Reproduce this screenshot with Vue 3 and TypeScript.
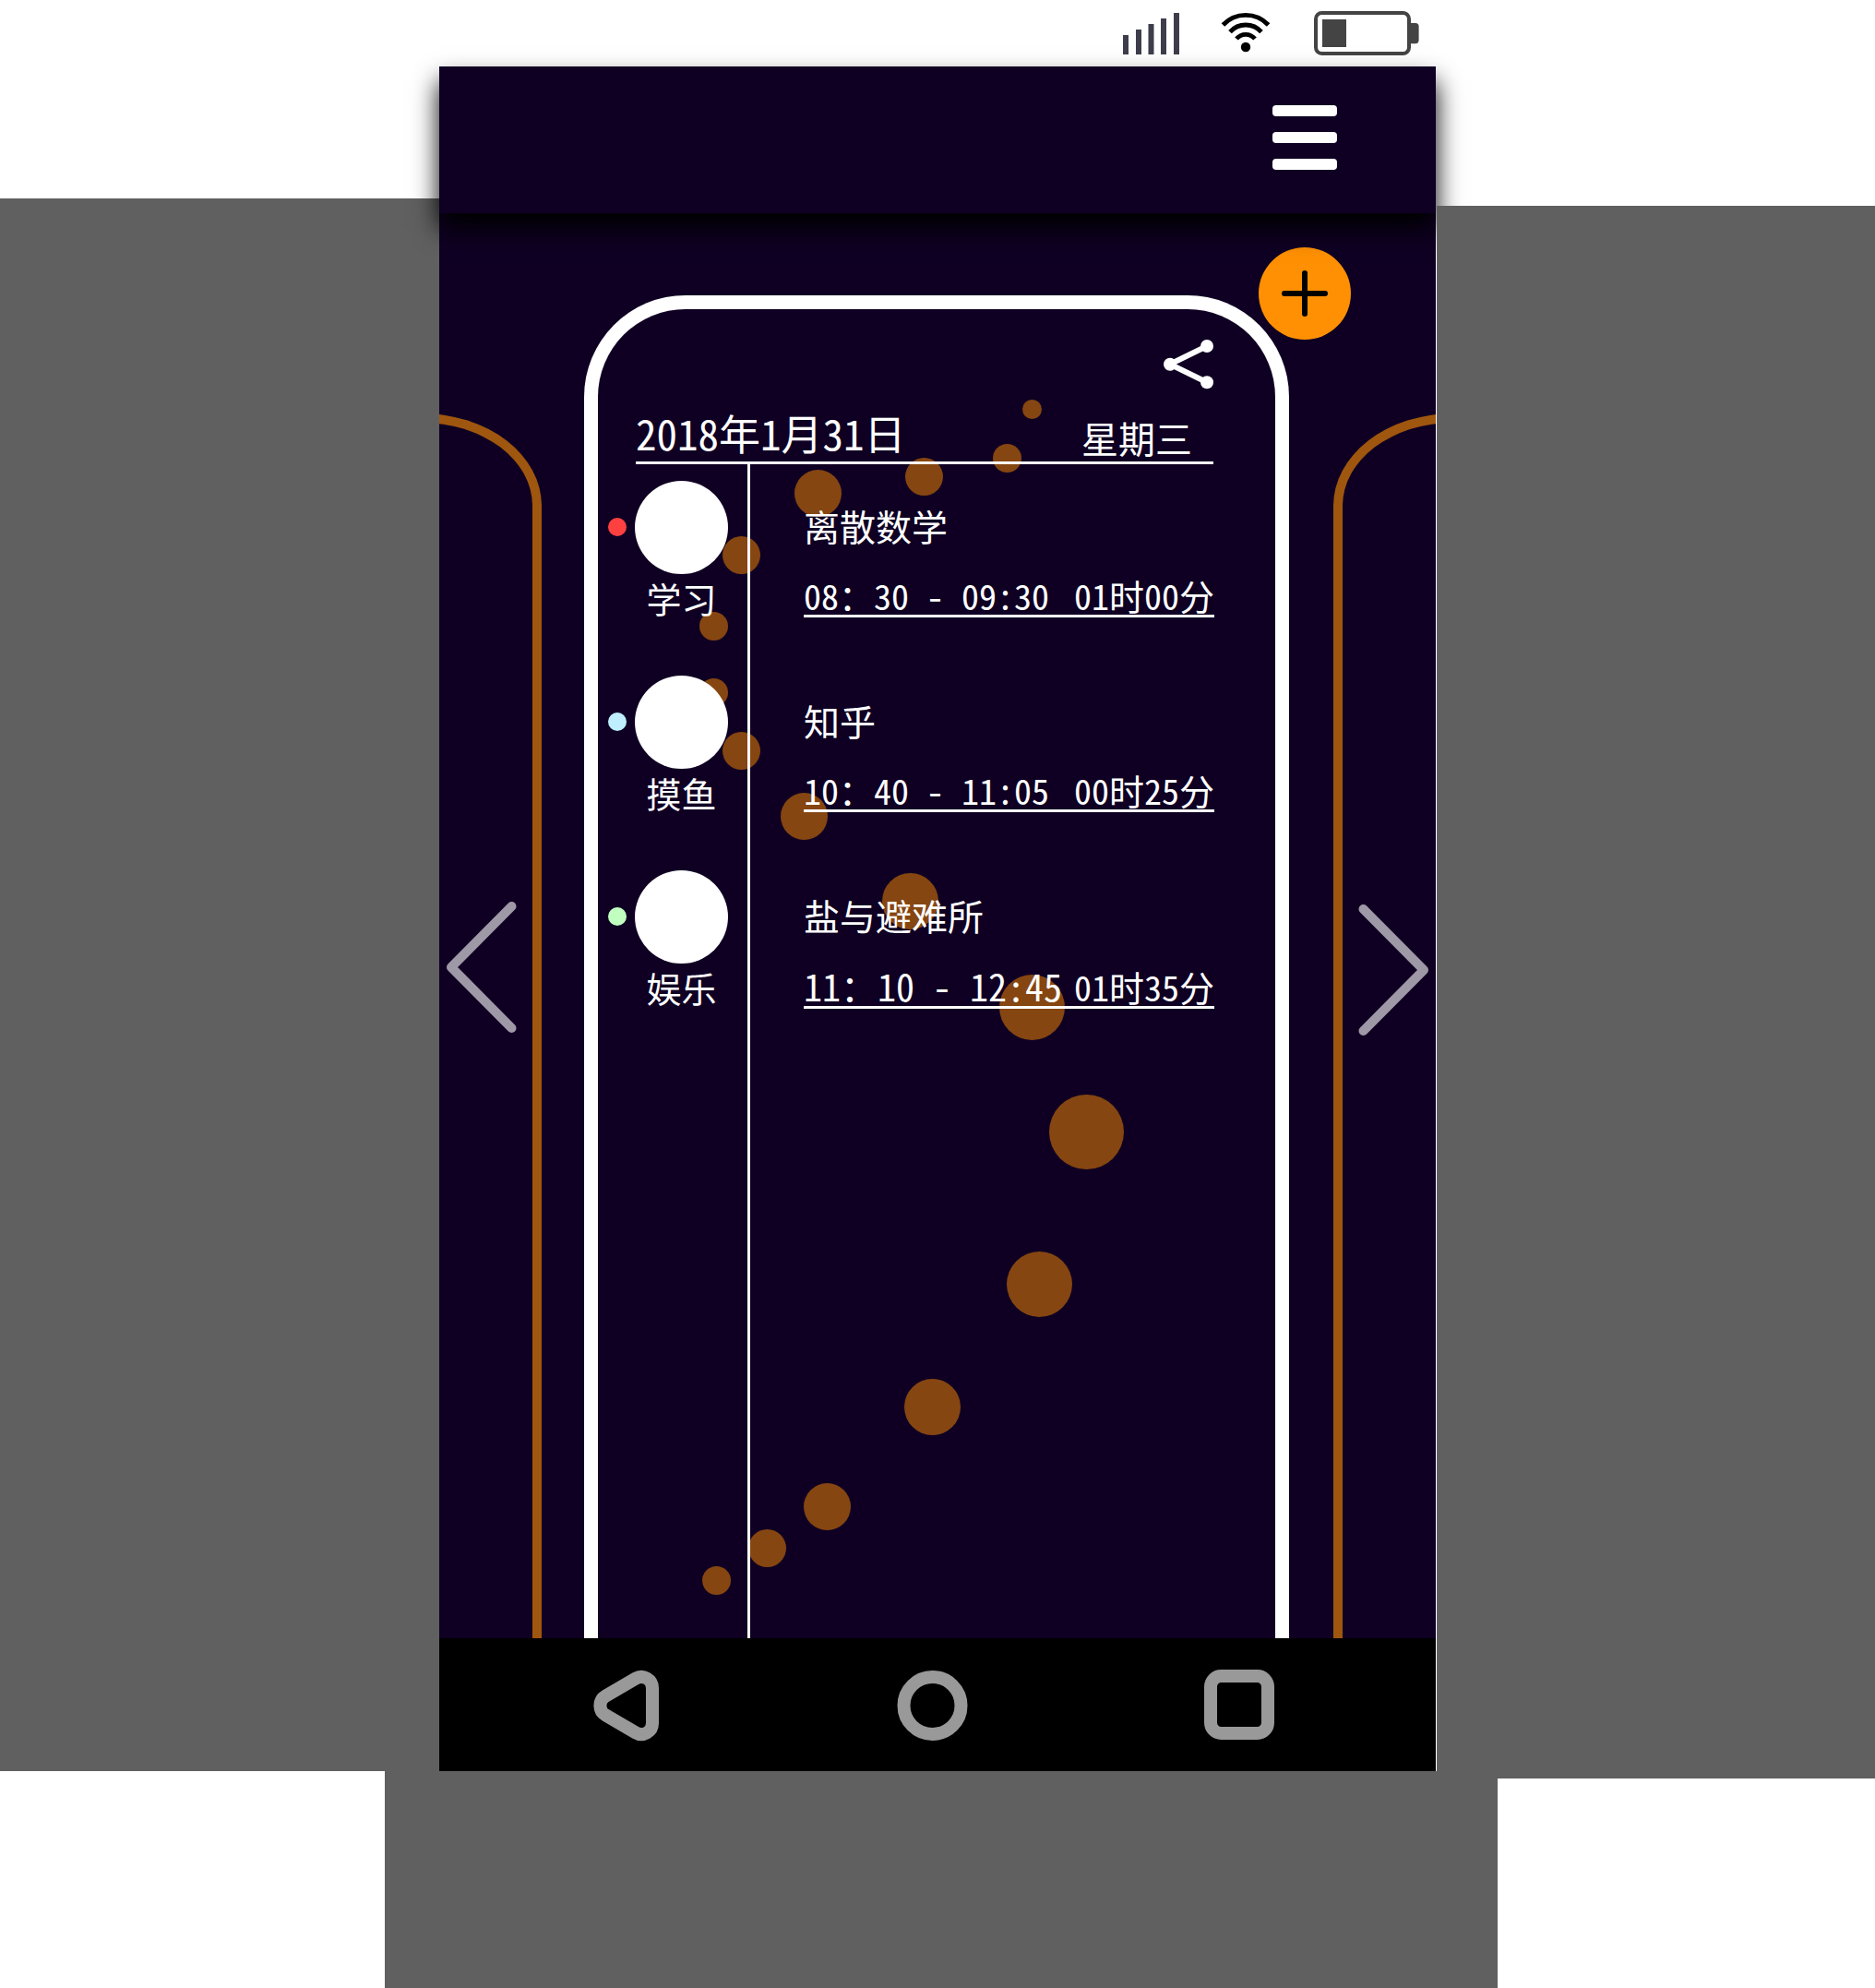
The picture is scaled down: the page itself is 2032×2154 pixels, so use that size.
<script setup lang="ts">
interface Entry {
  category: string
  color: string
  title: string
  time: string
  duration: string
  large?: boolean
}

interface Bead {
  x: number
  y: number
  r: number
}

const entries: Entry[] = [
  { category: '学习', color: '#ff4040', title: '离散数学', time: '08：30 - 09:30', duration: '01时00分' },
  { category: '摸鱼', color: '#bfefff', title: '知乎', time: '10：40 - 11:05', duration: '00时25分' },
  { category: '娱乐', color: '#c1ffc1', title: '盐与避难所', time: '11：10 - 12:45', duration: '01时35分', large: true },
]

// Decorative trail of beads winding down behind the schedule
const beads: Bead[] = [
  { x: 470.5, y: 108.5, r: 10.5 },
  { x: 443.5, y: 161.5, r: 15.5 },
  { x: 353.5, y: 181.5, r: 20.5 },
  { x: 238.5, y: 199.5, r: 25.5 },
  { x: 155.5, y: 266.5, r: 20.5 },
  { x: 125.5, y: 343.5, r: 15.5 },
  { x: 125.5, y: 415.5, r: 15.5 },
  { x: 155.5, y: 478.5, r: 20.5 },
  { x: 223.5, y: 549.5, r: 25.5 },
  { x: 338.5, y: 641.5, r: 30.5 },
  { x: 470.5, y: 756.5, r: 35.5 },
  { x: 529.5, y: 891.5, r: 40.5 },
  { x: 478.5, y: 1056.5, r: 35.5 },
  { x: 362.5, y: 1189.5, r: 30.5 },
  { x: 248.5, y: 1297.5, r: 25.5 },
  { x: 183.5, y: 1342.5, r: 20.5 },
  { x: 128.5, y: 1377.5, r: 15.5 },
]
</script>

<template>
  <div class="page">
    <div class="stage">
      <div class="panel panel-left"></div>

      <div class="phone">
        <div class="status">
          <svg class="signal" viewBox="0 0 62 72" fill="#3d3d4b" aria-hidden="true">
            <rect x="0" y="38" width="6" height="21" />
            <rect x="14" y="32" width="6" height="27" />
            <rect x="27.5" y="26" width="6" height="33" />
            <rect x="41" y="20" width="6" height="39" />
            <rect x="55" y="14" width="6" height="45" />
          </svg>
          <svg class="wifi" viewBox="0 0 54 72" fill="none" stroke="#000" stroke-width="4.8" aria-hidden="true">
            <path d="M2.4 27A33.6 33.6 0 0 1 51.6 27" />
            <path d="M10 34.6A22.8 22.8 0 0 1 44 34.6" />
            <path d="M17 42A13 13 0 0 1 37 42" />
            <circle cx="27" cy="51" r="5.2" fill="#000" stroke="none" />
          </svg>
          <svg class="battery" viewBox="0 0 114 72" aria-hidden="true">
            <rect x="2" y="14" width="101" height="44" rx="6.5" fill="#fff" stroke="#444" stroke-width="4" />
            <rect x="9" y="21" width="26" height="30" fill="#444" />
            <path d="M104 25h6a3.6 3.6 0 0 1 3.6 3.6v15a3.6 3.6 0 0 1-3.6 3.6h-6z" fill="#444" />
          </svg>
        </div>

        <header class="bar">
          <button class="menu" type="button" aria-label="菜单">
            <span></span>
            <span></span>
            <span></span>
          </button>
        </header>

        <main class="screen">
          <div class="peek peek-left"></div>

          <section class="card">
            <svg class="trail" viewBox="0 0 734 1440" aria-hidden="true">
              <circle v-for="(b, i) in beads" :key="i" :cx="b.x" :cy="b.y" :r="b.r" fill="#864611" />
            </svg>
            <div class="tools">
              <button class="share" type="button" aria-label="分享">
                <svg viewBox="0 0 56 54" fill="#fff" stroke="#fff" aria-hidden="true">
                  <path d="M48 7L8 26.7L48 46.3" fill="none" stroke-width="6" />
                  <circle cx="8" cy="26.7" r="7" stroke="none" />
                  <circle cx="48" cy="7" r="7" stroke="none" />
                  <circle cx="48" cy="46.3" r="7" stroke="none" />
                </svg>
              </button>
            </div>
            <div class="day">
              <time class="date" datetime="2018-01-31">2018年1月31日</time>
              <span class="weekday">星期三</span>
            </div>
            <ul class="timeline">
              <li v-for="e in entries" :key="e.title" class="entry">
                <div class="category">
                  <span class="dot" :style="{ background: e.color }"></span>
                  <span class="avatar"></span>
                  <span class="label">{{ e.category }}</span>
                </div>
                <div class="detail">
                  <h2 class="title">{{ e.title }}</h2>
                  <p :class="['slot', { 'slot-large': e.large }]">
                    <span class="range">{{ e.time }}</span>
                    <span class="duration">{{ e.duration }}</span>
                  </p>
                </div>
              </li>
            </ul>
          </section>

          <div class="peek peek-right"></div>

          <button class="add" type="button" aria-label="添加">
            <svg viewBox="0 0 100 100" fill="none" stroke="#000" stroke-width="6" stroke-linecap="round" aria-hidden="true">
              <path d="M50 28V72M28 50H72" />
            </svg>
          </button>
          <button class="arrow arrow-prev" type="button" aria-label="前一天">
            <svg viewBox="0 0 76 144" aria-hidden="true">
              <path d="M70.5 6L5 72L70.5 138" />
            </svg>
          </button>
          <button class="arrow arrow-next" type="button" aria-label="后一天">
            <svg viewBox="0 0 76 144" aria-hidden="true">
              <path d="M5.5 6L71 72L5.5 138" />
            </svg>
          </button>
        </main>

        <nav class="nav">
          <button type="button" aria-label="返回">
            <svg viewBox="0 0 76 76">
              <path d="M16.4 27.6L48.9 8.6A12 12 0 0 1 67 19V57A12 12 0 0 1 48.9 67.4L16.4 48.4A12 12 0 0 1 16.4 27.6Z" />
            </svg>
          </button>
          <button type="button" aria-label="主屏幕">
            <svg viewBox="0 0 76 76"><circle cx="37.5" cy="38" r="31" /></svg>
          </button>
          <button type="button" aria-label="最近任务">
            <svg viewBox="0 0 76 76"><rect x="7" y="6" width="62" height="62" rx="11.5" /></svg>
          </button>
        </nav>
      </div>

      <div class="panel panel-right"></div>
    </div>
    <div class="base"></div>
  </div>
</template>

<style>
body {
  margin: 0;
  background: #fff;
}
</style>

<style scoped>
.page {
  display: flex;
  flex-direction: column;
  min-height: 100vh;
  font-family: 'Noto Sans CJK SC', sans-serif;
  font-weight: 400;
  font-feature-settings: 'hwid';
  color: #fff;
}

button {
  display: block;
  padding: 0;
  border: 0;
  background: none;
  cursor: pointer;
}

svg {
  display: block;
  overflow: visible;
}

.stage {
  flex: 1;
  display: grid;
  grid-template-columns: 1fr 1080px 1fr;
}

.panel {
  position: relative;
  z-index: 1;
  background: #606060;
}

.panel-left {
  margin-top: 215px;
}

.panel-right {
  margin: 223px 0 -8px 1px;
}

.base {
  align-self: center;
  width: 1206px;
  height: 235px;
  margin-right: -8px;
  background: #606060;
}

.phone {
  display: flex;
  flex-direction: column;
}

.status {
  display: flex;
  justify-content: flex-end;
  gap: 44px;
  height: 72px;
  padding-right: 18px;
}

.status svg {
  height: 72px;
}

.signal {
  width: 62px;
}

.wifi {
  width: 54px;
}

.battery {
  width: 114px;
  margin-left: 3px;
}

.bar {
  position: relative;
  z-index: 1;
  display: flex;
  justify-content: flex-end;
  height: 159px;
  box-sizing: border-box;
  padding: 42px 107px 0 0;
  background: #0f0023;
  box-shadow: 0 16px 26px #000;
}

.menu {
  display: flex;
  flex-direction: column;
  gap: 17px;
  width: 70px;
  height: 70px;
}

.menu span {
  width: 100%;
  height: 12px;
  border-radius: 4px;
  background: #fff;
}

.screen {
  position: relative;
  z-index: 0;
  flex: 1;
  display: flex;
  overflow: hidden;
  background: #0f0023;
}

/* Edges of the neighbouring day cards */
.peek {
  width: 111px;
  flex: none;
  display: flex;
  margin-top: 217px;
  overflow: hidden;
}

.peek-left {
  justify-content: flex-end;
  margin-right: 46px;
}

.peek-right {
  margin-left: 48px;
}

.peek::before {
  content: '';
  flex: none;
  width: 300px;
  box-sizing: border-box;
  border: 10px solid #9f560e;
  border-bottom: 0;
  border-radius: 130px 130px 0 0 / 100px 100px 0 0;
}

.card {
  position: relative;
  flex: 1;
  display: flex;
  flex-direction: column;
  margin-top: 89px;
  padding-top: 33px;
  border: 15px solid #fff;
  border-bottom: 0;
  border-radius: 110px 110px 0 0;
}

.trail {
  position: absolute;
  top: 0;
  left: 0;
  z-index: -1;
  width: 734px;
  height: 1440px;
}

.tools {
  display: flex;
  justify-content: flex-end;
  padding-right: 66px;
}

.share,
.share svg {
  width: 56px;
  height: 54px;
}

.day {
  display: flex;
  justify-content: space-between;
  align-items: flex-end;
  height: 75px;
  margin: 0 67px 0 41px;
  padding-bottom: 3px;
  border-bottom: 3px solid #fff;
}

.date {
  font-size: 45px;
  line-height: 56px;
}

.weekday {
  padding-right: 23px;
  font-size: 40px;
  line-height: 46px;
}

.timeline {
  flex: 1;
  margin: 0;
  padding: 17px 0 0;
  list-style: none;
  background: linear-gradient(#fff, #fff) 162px 0 / 3px 100% no-repeat;
}

.entry {
  display: flex;
  height: 211px;
}

.category {
  display: grid;
  grid-template-columns: 20px 101px;
  grid-template-rows: 102px 51px;
  column-gap: 9px;
  align-items: center;
  align-content: start;
  width: 154px;
  padding-left: 11px;
}

.dot {
  width: 20px;
  height: 20px;
  border-radius: 50%;
}

.avatar {
  width: 101px;
  height: 101px;
  border-radius: 50%;
  background: #fff;
}

.label {
  grid-column: 2;
  text-align: center;
  font-size: 38px;
  line-height: 51px;
}

.detail {
  flex: 1;
  margin: 0 66px 0 58px;
}

.title {
  margin: 0 0 3px;
  font-size: 39px;
  font-weight: 400;
  line-height: 98px;
}

.slot {
  display: flex;
  justify-content: space-between;
  align-items: baseline;
  height: 45px;
  margin: 0;
  border-bottom: 3px solid #fff;
  font-size: 38px;
  line-height: 48px;
  white-space: pre;
}

.slot-large {
  height: 47px;
  line-height: 50px;
}

.slot-large .range {
  font-size: 40px;
}

.add {
  position: absolute;
  top: 37px;
  right: 92px;
  width: 100px;
  height: 100px;
  border-radius: 50%;
  background: #ff9003;
}

.arrow {
  position: absolute;
  width: 76px;
  height: 144px;
}

.arrow path {
  fill: none;
  stroke: #9f99a7;
  stroke-width: 10;
  stroke-linecap: round;
  stroke-linejoin: round;
}

.arrow-prev {
  top: 745px;
  left: 8px;
}

.arrow-next {
  top: 748px;
  right: 8px;
}

.nav {
  display: flex;
  justify-content: space-between;
  align-items: center;
  box-sizing: border-box;
  height: 144px;
  padding: 2px 175px 0 164px;
  background: #000;
}

.nav button,
.nav svg {
  width: 76px;
  height: 76px;
}

.nav svg {
  fill: none;
  stroke: #999;
  stroke-width: 14;
}
</style>
